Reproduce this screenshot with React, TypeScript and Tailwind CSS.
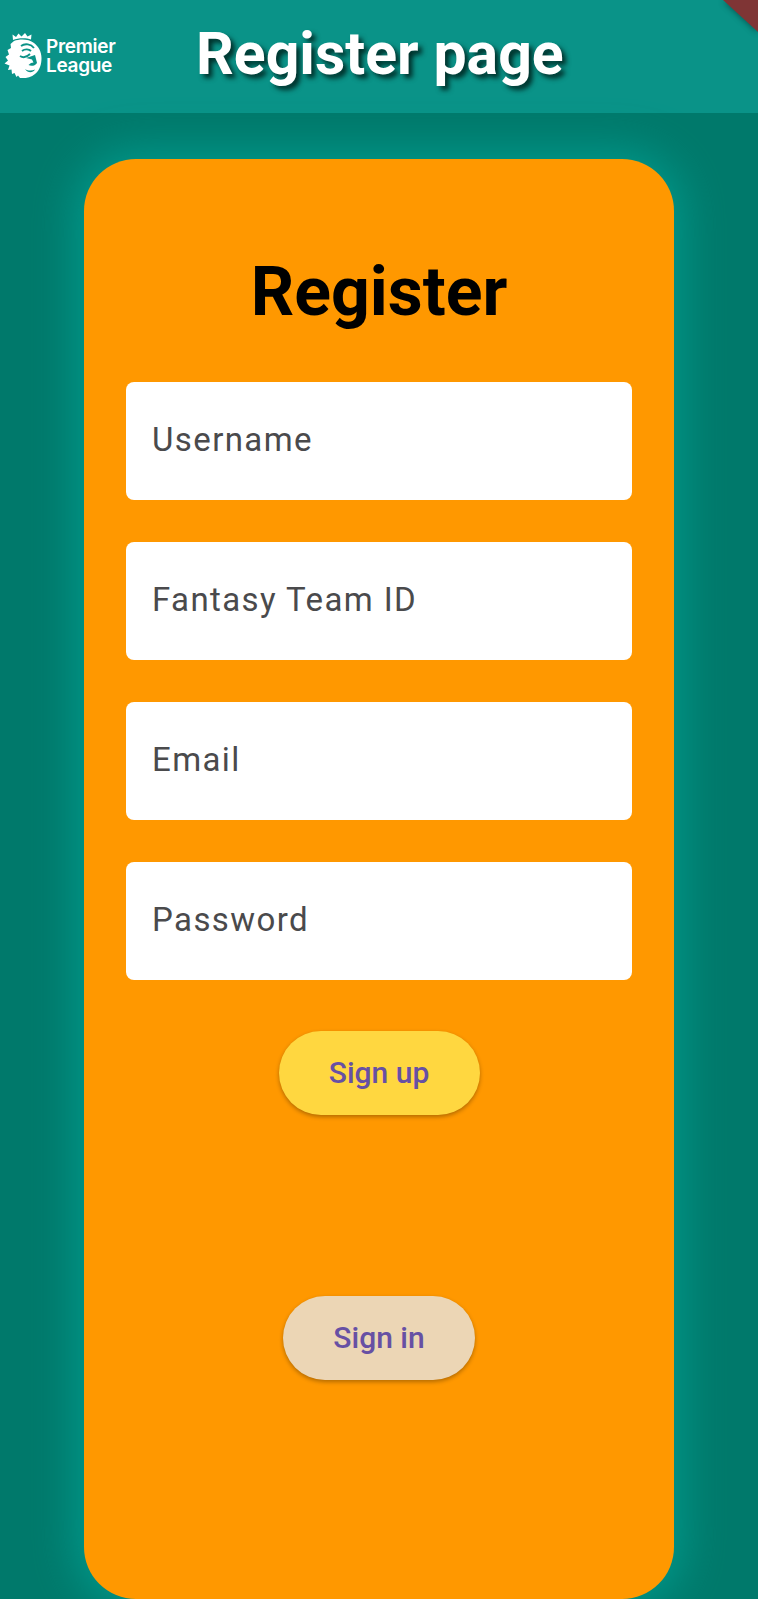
const FIELDS = ["Username", "Fantasy Team ID", "Email", "Password"]

function LionLogo() {
  return (
    <svg viewBox="0 0 38 46" className="h-[46px] w-[38px] shrink-0" aria-hidden="true">
      {/* crown */}
      <path fill="#fff" d="M9 7 L8.500 1.500 L12 4 L14.500 0.500 L17.500 3.500 L21 0 L23.500 3.500 L27.500 1.500 L27 6.500 C22 4.800 14 5 9 7 Z" />
      {/* mane and head */}
      <path
        fill="#fff"
        d="M10 8 C16 5.500 25 6 30 10 C34 13 37.500 18 37.500 25 C37.500 31 36 37 31 41 C27 44.500 21 45.500 16 45 L14 42.500 L12.500 44 L10.500 40 L8 41 L7.500 36.500 L4 37 L5.500 32.500 L0.500 30.500 L4 27.500 L1.500 24 L5 21.500 L3.500 17 L7 15 L6.500 11 Z"
      />
      {/* face */}
      <path fill="none" stroke="#0b9287" strokeWidth="1.800" d="M17 13 C21 10 27 11 30 15 M18 18 C21 15.500 25 16 27 18 M16 23 C19 25 23 24 26 21" />
      <path fill="#0b9287" d="M22 25 L31 22 L33 30 C31 33 27 33.500 24.500 32 L27 30 L29.500 29.500 L28 26.500 Z" />
      <path fill="#0b9287" d="M21 36 C24 38 28 38 31 36.500 C29 40 24 40.500 21 36 Z" />
    </svg>
  )
}

export default function App() {
  return (
    <div className="relative h-[1599px] w-[758px] overflow-hidden bg-[#00796b] font-['Roboto',sans-serif]">
      {/* App bar */}
      <header className="flex h-[113px] items-center bg-[#0a9388]">
        <div className="ml-[4px] flex w-[192px] items-center gap-[4px] pb-[1px]">
          <LionLogo />
          <div className="font-['Inter',sans-serif] text-[19px] font-semibold leading-[19px] tracking-[-0.3px] text-white">
            Premier
            <br />
            League
          </div>
        </div>
        <h1 className="pb-[6px] text-[59px] font-bold leading-none text-white [text-shadow:4px_4px_5px_#00302a]">
          Register page
        </h1>
      </header>

      {/* Debug banner */}
      <div className="absolute right-0 top-0 drop-shadow-[0_1px_3px_rgba(0,0,0,0.4)]">
        <div className="h-[32px] w-[35px] bg-[#7f3535] [clip-path:polygon(0_0,100%_0,100%_100%)]" />
      </div>

      {/* Form card */}
      <main className="mx-auto mt-[46px] flex h-[1440px] w-[590px] flex-col items-center rounded-[52px] bg-[#ff9800] px-[42px] pt-[91px] shadow-[0_0_45px_8px_#009a8c]">
        <h2 className="h-[84px] text-[68px] font-bold leading-[84px] text-black">Register</h2>

        <div className="mt-[48px] flex w-full flex-col gap-[42px]">
          {FIELDS.map((label) => (
            <div key={label} className="flex h-[118px] items-center rounded-[8px] bg-white pl-[26px]">
              <span className="-mt-[3px] text-[33px] leading-none tracking-[1.4px] text-[#4a4a4c]">{label}</span>
            </div>
          ))}
        </div>

        <button className="mt-[51px] flex h-[84px] w-[201px] items-center justify-center rounded-full bg-[#ffd740] pb-[2px] text-[30px] font-medium text-[#6750a4] shadow-[0_2px_4px_rgba(0,0,0,0.3)]">
          Sign up
        </button>

        <button className="mt-[181px] flex h-[84px] w-[192px] items-center justify-center rounded-full bg-[#ecd6b5] pb-[2px] text-[30px] font-medium text-[#6750a4] shadow-[0_2px_4px_rgba(0,0,0,0.3)]">
          Sign in
        </button>
      </main>
    </div>
  )
}
